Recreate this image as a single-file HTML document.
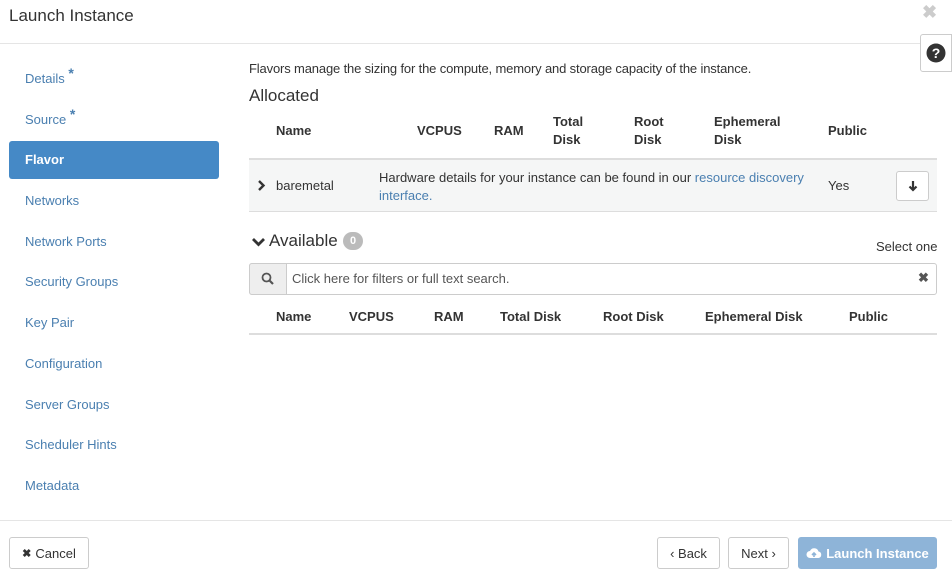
<!DOCTYPE html>
<html><head><meta charset="utf-8"><style>
*{box-sizing:border-box}
body{margin:0;width:952px;height:576px;background:#fff;font-family:"Liberation Sans",Arial,sans-serif;font-size:13px;color:#333;position:relative;overflow:hidden}
.a{position:absolute}
.nav{color:#4a7fb0;font-size:13px}
.th{font-weight:bold;color:#333;font-size:13px;line-height:18px}
.link{color:#4a7fb0}
.btn{position:absolute;border:1px solid #ccc;border-radius:3px;background:#fff;font-size:13px;display:flex;align-items:center;justify-content:center;color:#333}
.ast{position:relative;top:-5px;font-weight:bold;font-size:14px}
</style></head><body>
<div class="a" style="left:9px;top:6px;font-size:17px;color:#333">Launch Instance</div>
<div class="a" style="left:922px;top:2px;font-size:18px;color:#ccc;font-weight:bold">✖</div>
<div class="a" style="left:0;top:43px;width:952px;height:1px;background:#e5e5e5"></div>
<div class="btn" style="left:920px;top:34px;width:32px;height:38px;border-radius:3px 0 0 3px">
<svg width="20" height="20" viewBox="0 0 20 20"><circle cx="10" cy="10" r="9.5" fill="#333"/><text x="10" y="15" text-anchor="middle" font-family="Liberation Sans" font-weight="bold" font-size="14" fill="#fff">?</text></svg></div>

<div class="a nav" style="left:25px;top:70px">Details <span class="ast">*</span></div>
<div class="a nav" style="left:25px;top:111px">Source <span class="ast">*</span></div>
<div class="a" style="left:9px;top:141px;width:210px;height:38px;background:#4589c6;border-radius:3px;color:#fff;font-weight:bold;padding:11px 16px">Flavor</div>
<div class="a nav" style="left:25px;top:193px">Networks</div>
<div class="a nav" style="left:25px;top:234px">Network Ports</div>
<div class="a nav" style="left:25px;top:274px">Security Groups</div>
<div class="a nav" style="left:25px;top:315px">Key Pair</div>
<div class="a nav" style="left:25px;top:356px">Configuration</div>
<div class="a nav" style="left:25px;top:397px">Server Groups</div>
<div class="a nav" style="left:25px;top:437px">Scheduler Hints</div>
<div class="a nav" style="left:25px;top:478px">Metadata</div>

<div class="a" style="left:249px;top:61px;font-size:13px;letter-spacing:-0.15px">Flavors manage the sizing for the compute, memory and storage capacity of the instance.</div>
<div class="a" style="left:249px;top:86px;font-size:17px">Allocated</div>
<div class="a th" style="left:276px;top:122px">Name</div>
<div class="a th" style="left:417px;top:122px">VCPUS</div>
<div class="a th" style="left:494px;top:122px">RAM</div>
<div class="a th" style="left:553px;top:113px">Total<br>Disk</div>
<div class="a th" style="left:634px;top:113px">Root<br>Disk</div>
<div class="a th" style="left:714px;top:113px">Ephemeral<br>Disk</div>
<div class="a th" style="left:828px;top:122px">Public</div>
<div class="a" style="left:249px;top:158px;width:688px;height:2px;background:#ddd"></div>
<div class="a" style="left:249px;top:160px;width:688px;height:52px;background:#f5f6f6;border-bottom:1px solid #ddd"></div>
<svg class="a" style="left:257px;top:180px" width="9" height="11" viewBox="0 0 9 11"><path d="M2 1 L6.5 5.5 L2 10" stroke="#333" stroke-width="2.4" fill="none"/></svg>
<div class="a" style="left:276px;top:178px">baremetal</div>
<div class="a" style="left:379px;top:169px;line-height:18px">Hardware details for your instance can be found in our <span class="link">resource discovery</span><br><span class="link">interface.</span></div>
<div class="a" style="left:828px;top:178px">Yes</div>
<div class="btn" style="left:896px;top:171px;width:33px;height:30px">
<svg width="10" height="12" viewBox="0 0 10 12"><path d="M5 1 V10 M1.5 6.5 L5 10 L8.5 6.5" stroke="#333" stroke-width="2.2" fill="none"/></svg></div>

<svg class="a" style="left:251px;top:236px" width="15" height="12" viewBox="0 0 15 12"><path d="M2 3 L7.5 8.5 L13 3" stroke="#333" stroke-width="2.8" fill="none"/></svg>
<div class="a" style="left:269px;top:231px;font-size:17px">Available</div>
<div class="a" style="left:343px;top:232px;width:20px;height:18px;border-radius:9px;background:#bbb;color:#fff;font-size:11px;text-align:center;line-height:18px;font-weight:bold">0</div>
<div class="a" style="left:876px;top:239px;font-size:13px">Select one</div>
<div class="a" style="left:249px;top:263px;width:688px;height:32px;border:1px solid #ccc;border-radius:3px"></div>
<div class="a" style="left:249px;top:263px;width:38px;height:32px;border:1px solid #ccc;border-radius:3px 0 0 3px;background:#eee"></div>
<svg class="a" style="left:261px;top:272px" width="13" height="13" viewBox="0 0 13 13"><circle cx="5.5" cy="5.5" r="4" stroke="#555" stroke-width="1.8" fill="none"/><path d="M8.5 8.5 L12 12" stroke="#555" stroke-width="2.2"/></svg>
<div class="a" style="left:292px;top:271px;color:#555">Click here for filters or full text search.</div>
<div class="a" style="left:918px;top:270px;font-size:13px;color:#555;font-weight:bold">✖</div>
<div class="a th" style="left:276px;top:308px">Name</div>
<div class="a th" style="left:349px;top:308px">VCPUS</div>
<div class="a th" style="left:434px;top:308px">RAM</div>
<div class="a th" style="left:500px;top:308px">Total Disk</div>
<div class="a th" style="left:603px;top:308px">Root Disk</div>
<div class="a th" style="left:705px;top:308px">Ephemeral Disk</div>
<div class="a th" style="left:849px;top:308px">Public</div>
<div class="a" style="left:249px;top:333px;width:688px;height:2px;background:#ddd"></div>

<div class="a" style="left:0;top:520px;width:952px;height:1px;background:#e5e5e5"></div>
<div class="btn" style="left:9px;top:537px;width:80px;height:32px"><b style="font-size:11px;margin-right:4px">✖</b>Cancel</div>
<div class="btn" style="left:657px;top:537px;width:63px;height:32px">‹ Back</div>
<div class="btn" style="left:728px;top:537px;width:61px;height:32px">Next ›</div>
<div class="btn" style="left:798px;top:537px;width:139px;height:32px;background:#8eb4d8;border-color:#8eb4d8;color:#fff;font-weight:bold">
<svg width="16" height="12" viewBox="0 0 16 12" style="margin-right:4px"><path d="M4 11 A3.5 3.5 0 0 1 4 4 A4.5 4.5 0 0 1 12.5 4.5 A3.3 3.3 0 0 1 12.5 11 Z" fill="#fff"/><path d="M8 10 V6 M6 8 L8 6 L10 8" stroke="#8eb4d8" stroke-width="1.6" fill="none"/></svg>Launch Instance</div>
</body></html>
